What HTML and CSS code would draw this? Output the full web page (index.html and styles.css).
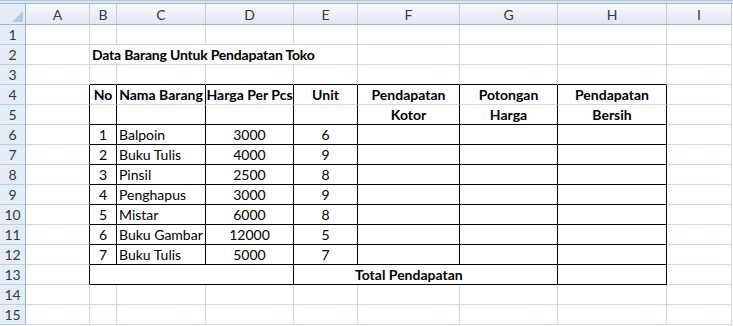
FILE: index.html
```html
<!DOCTYPE html>
<html lang="id">
<head>
    <meta charset="UTF-8">
    <meta name="viewport" content="width=device-width, initial-scale=1.0">
    <title>Data Barang Untuk Pendapatan Toko</title>
    <link rel="stylesheet" href="styles.css">
</head>
<body>
    <div class="topbar"></div>

    <div class="sheet">
        <!-- column headers -->
        <div class="corner"><span></span></div>
        <div class="ch">A</div><div class="ch">B</div><div class="ch">C</div><div class="ch">D</div><div class="ch">E</div>
        <div class="ch">F</div><div class="ch">G</div><div class="ch">H</div><div class="ch">I</div>

        <!-- row 1 -->
        <div class="rh">1</div>
        <div></div><div></div><div></div><div></div><div></div><div></div><div></div><div></div><div></div>

        <!-- row 2 -->
        <div class="rh">2</div>
        <div></div>
        <div class="title bold">Data Barang Untuk Pendapatan Toko</div>
        <div></div><div></div><div></div><div></div>

        <!-- row 3 -->
        <div class="rh">3</div>
        <div></div>
        <div class="above"></div><div class="above"></div><div class="above"></div><div class="above"></div>
        <div class="above"></div><div class="above"></div><div class="above"></div>
        <div></div>

        <!-- row 4 -->
        <div class="rh">4</div>
        <div class="edge"></div>
        <div class="th bold c">No</div>
        <div class="th bold c">Nama Barang</div>
        <div class="th bold c">Harga Per Pcs</div>
        <div class="th bold c">Unit</div>
        <div class="th bold c">Pendapatan</div>
        <div class="th bold c">Potongan</div>
        <div class="th bold c">Pendapatan</div>
        <div></div>

        <!-- row 5 -->
        <div class="rh">5</div>
        <div class="edge"></div>
        <div class="tb"></div><div class="tb"></div><div class="tb"></div><div class="tb"></div>
        <div class="tb bold c">Kotor</div>
        <div class="tb bold c">Harga</div>
        <div class="tb bold c">Bersih</div>
        <div></div>

        <!-- rows 6 - 12 -->
        <div class="rh">6</div>
        <div class="edge"></div>
        <div class="tb c">1</div><div class="tb">Balpoin</div><div class="tb c">3000</div><div class="tb c">6</div>
        <div class="tb"></div><div class="tb"></div><div class="tb"></div>
        <div></div>

        <div class="rh">7</div>
        <div class="edge"></div>
        <div class="tb c">2</div><div class="tb">Buku Tulis</div><div class="tb c">4000</div><div class="tb c">9</div>
        <div class="tb"></div><div class="tb"></div><div class="tb"></div>
        <div></div>

        <div class="rh">8</div>
        <div class="edge"></div>
        <div class="tb c">3</div><div class="tb">Pinsil</div><div class="tb c">2500</div><div class="tb c">8</div>
        <div class="tb"></div><div class="tb"></div><div class="tb"></div>
        <div></div>

        <div class="rh">9</div>
        <div class="edge"></div>
        <div class="tb c">4</div><div class="tb">Penghapus</div><div class="tb c">3000</div><div class="tb c">9</div>
        <div class="tb"></div><div class="tb"></div><div class="tb"></div>
        <div></div>

        <div class="rh">10</div>
        <div class="edge"></div>
        <div class="tb c">5</div><div class="tb">Mistar</div><div class="tb c">6000</div><div class="tb c">8</div>
        <div class="tb"></div><div class="tb"></div><div class="tb"></div>
        <div></div>

        <div class="rh">11</div>
        <div class="edge"></div>
        <div class="tb c">6</div><div class="tb">Buku Gambar</div><div class="tb c">12000</div><div class="tb c">5</div>
        <div class="tb"></div><div class="tb"></div><div class="tb"></div>
        <div></div>

        <div class="rh">12</div>
        <div class="edge"></div>
        <div class="tb c">7</div><div class="tb">Buku Tulis</div><div class="tb c">5000</div><div class="tb c">7</div>
        <div class="tb"></div><div class="tb"></div><div class="tb"></div>
        <div></div>

        <!-- row 13 -->
        <div class="rh">13</div>
        <div class="edge"></div>
        <div class="tb span3"></div>
        <div class="tb span3 bold total">Total Pendapatan</div>
        <div class="tb"></div>
        <div></div>

        <!-- rows 14 - 15 -->
        <div class="rh">14</div>
        <div></div><div></div><div></div><div></div><div></div><div></div><div></div><div></div><div></div>

        <div class="rh">15</div>
        <div></div><div></div><div></div><div></div><div></div><div></div><div></div><div></div><div></div>
    </div>
</body>
</html>
```

FILE: styles.css
```css
body {
    margin: 0;
    background-color: #fff;
    font-family: Lato, "Liberation Sans", sans-serif;
    font-size: 14px;
    color: #000;
    overflow: hidden;
}

.topbar {
    height: 2px;
    background-color: #dce5f0;
    border-top: 1px solid #b3c4d9;
    border-bottom: 1px solid #9eb6ce;
}

.sheet {
    display: grid;
    grid-template-columns: 26px 64px 27px 89px 88px 64px 102px 98px 109px 65px;
    grid-template-rows: 21px repeat(15, 20px);
    width: 732px;
}

.sheet > div {
    box-sizing: border-box;
    display: flex;
    align-items: center;
    padding: 0 2px;
    line-height: 19px;
    white-space: nowrap;
    border-right: 1px solid #d0d7e5;
    border-bottom: 1px solid #d0d7e5;
}

.sheet > .corner {
    background-color: #e4ecf7;
    border-right-color: #9eb6ce;
    border-bottom-color: #9eb6ce;
    justify-content: flex-end;
    align-items: flex-end;
    padding: 0 2px 2px 0;
}

.corner span {
    width: 0;
    height: 0;
    border-left: 11px solid transparent;
    border-bottom: 11px solid #b6c6dc;
}

.sheet > .ch {
    background: linear-gradient(#f8fafd, #e0e7f0);
    border-right-color: #c1cedf;
    border-bottom-color: #9eb6ce;
    justify-content: center;
    color: #2c3a4d;
}

.sheet > .rh {
    background-color: #e4ecf7;
    border-right-color: #9eb6ce;
    border-bottom-color: #c1cedf;
    justify-content: center;
    color: #2c3a4d;
}

.sheet > .title {
    grid-column: span 4;
    letter-spacing: -0.2px;
}

.sheet > .above {
    border-bottom-color: #000;
}

.sheet > .edge {
    border-right-color: #000;
}

.sheet > .th {
    border-right-color: #000;
}

.sheet > .tb {
    border-right-color: #000;
    border-bottom-color: #000;
}

.sheet > .span3 {
    grid-column: span 3;
}

.sheet > .total {
    padding-left: 61px;
}

.sheet > .c {
    justify-content: center;
}

.bold {
    font-weight: 700;
}
```
